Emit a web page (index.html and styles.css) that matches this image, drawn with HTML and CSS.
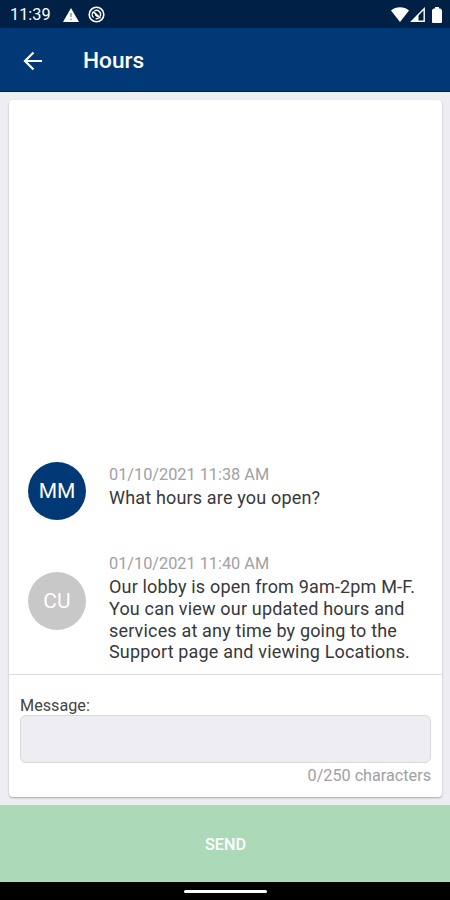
FILE: index.html
```html
<!DOCTYPE html>
<html lang="en">
<head>
    <meta charset="UTF-8">
    <meta name="viewport" content="width=device-width, initial-scale=1.0">
    <title>Hours</title>
    <link rel="stylesheet" href="styles.css">
</head>
<body>
    <div class="status-bar">
        <span class="clock">11:39</span>
        <svg class="warning" width="16" height="14" viewBox="0 0 16 14">
            <path d="M8 0L16 14H0z" fill="#fff"/>
            <path d="M8 5v4M8 10.5v1.5" stroke="#8a94a4" stroke-width="1.5"/>
        </svg>
        <svg class="sync" width="17" height="17" viewBox="0 0 17 17" fill="none" stroke="#fff">
            <circle cx="8.5" cy="8.5" r="7.3" stroke-width="1.6"/>
            <path d="M5.6 11.6A4.2 4.2 0 0 1 5.2 5.8M6.4 4.9A4.2 4.2 0 0 1 12.2 10.4M10.8 12A4.2 4.2 0 0 1 7.6 12.6" stroke-width="1.4"/>
            <path d="M5.2 5.6l7.2 6.6M7.2 8.4L10 11" stroke-width="1.6"/>
        </svg>
        <div class="system-icons">
            <svg width="18" height="15" viewBox="0 0 18 15">
                <path d="M0 3.4C5 -.8 13 -.8 18 3.4L9 15z" fill="#fff"/>
            </svg>
            <svg class="signal" width="15" height="15" viewBox="0 0 15 15">
                <path d="M1.8 14.2L14.2 1.8V14.2z" fill="none" stroke="#fff" stroke-width="1.4"/>
                <path d="M8.5 6.8V14H2z" fill="#fff"/>
            </svg>
            <svg class="battery" width="10" height="16" viewBox="0 0 10 16">
                <path d="M3 0h4v1.6h1.4L10 3v12a1 1 0 0 1-1 1H1a1 1 0 0 1-1-1V3l1.6-1.4H3z" fill="#fff"/>
            </svg>
        </div>
    </div>

    <header class="app-bar">
        <svg class="back" width="20" height="20" viewBox="0 0 20 20">
            <path d="M19 10H2M10.5 1.5L2 10l8.5 8.5" fill="none" stroke="#fff" stroke-width="2.2"/>
        </svg>
        <h1>Hours</h1>
    </header>

    <main class="content">
        <div class="card">
            <div class="thread">
                <div class="message">
                    <div class="avatar">MM</div>
                    <div class="message-body">
                        <div class="time">01/10/2021 11:38 AM</div>
                        <div class="text">What hours are you open?</div>
                    </div>
                </div>
                <div class="message reply">
                    <div class="avatar">CU</div>
                    <div class="message-body">
                        <div class="time">01/10/2021 11:40 AM</div>
                        <div class="text">Our lobby is open from 9am-2pm M-F.<br>You can view our updated hours and<br>services at any time by going to the<br>Support page and viewing Locations.</div>
                    </div>
                </div>
            </div>
            <div class="compose">
                <label for="message">Message:</label>
                <input id="message" type="text" maxlength="250">
                <div class="counter">0/250 characters</div>
            </div>
        </div>
    </main>

    <button class="send">SEND</button>
    <div class="nav-bar"><div class="handle"></div></div>
</body>
</html>
```

FILE: styles.css
```css
* {
    box-sizing: border-box;
}
body {
    margin: 0;
    height: 900px;
    display: flex;
    flex-direction: column;
    font-family: Roboto, sans-serif;
    background-color: #eeeef2;
    overflow: hidden;
}
.status-bar {
    height: 28px;
    display: flex;
    align-items: center;
    padding: 1px 8px 0 10px;
    background-color: #002145;
    color: #fff;
}
.clock {
    width: 41px;
    font-size: 16.3px;
    line-height: 28px;
}
.warning {
    margin-left: 12px;
}
.sync {
    margin-left: 9px;
}
.system-icons {
    margin-left: auto;
    display: flex;
    align-items: center;
}
.signal {
    margin-left: 1px;
}
.battery {
    margin-left: 7px;
}
.app-bar {
    height: 64px;
    display: flex;
    align-items: center;
    padding: 2px 0 0 23px;
    background-color: #003976;
    border-bottom: 1px solid #001d5c;
    color: #fff;
}
.app-bar h1 {
    margin: 1px 0 0 40px;
    font-size: 22.7px;
    font-weight: 500;
    line-height: 28px;
}
.content {
    flex: 1;
    display: flex;
    padding: 8px 8px 8px 9px;
}
.card {
    flex: 1;
    display: flex;
    flex-direction: column;
    background-color: #fff;
    border-radius: 4px;
    box-shadow: 0 1px 2px rgba(0, 0, 0, 0.3);
}
.thread {
    flex: 1;
    display: flex;
    flex-direction: column;
    justify-content: flex-end;
    padding: 0 0 11px 19px;
}
.message {
    display: flex;
    gap: 23px;
    margin-bottom: 32px;
}
.avatar {
    width: 58px;
    height: 58px;
    margin-top: -1px;
    border-radius: 50%;
    background-color: #003976;
    color: #fff;
    font-size: 21px;
    line-height: 59px;
    text-align: center;
}
.reply {
    margin-bottom: 0;
}
.reply .avatar {
    margin-top: 20px;
    background-color: #c8c8c8;
}
.time {
    color: #a0a0a5;
    font-size: 16.3px;
    line-height: 24px;
}
.text {
    color: #38383a;
    font-size: 18px;
    line-height: 21.7px;
    letter-spacing: 0.17px;
    white-space: nowrap;
}
.compose {
    height: 123px;
    padding: 21px 11px 0;
    border-top: 1px solid #dcdcde;
}
.compose label {
    display: block;
    color: #444;
    font-size: 16.2px;
    line-height: 19px;
}
.compose input {
    display: block;
    width: 100%;
    height: 48px;
    border: 1px solid #d8d8dc;
    border-radius: 6px;
    background-color: #eeeef2;
}
.counter {
    color: #a0a0a5;
    font-size: 16.2px;
    line-height: 25px;
    text-align: right;
}
.send {
    height: 77px;
    border: 0;
    padding: 1px 0 0 1px;
    background-color: #acdab9;
    color: #fff;
    font-family: inherit;
    font-size: 16.2px;
    font-weight: 500;
}
.nav-bar {
    height: 18px;
    display: flex;
    justify-content: center;
    padding-top: 8px;
    background-color: #000;
}
.handle {
    width: 83px;
    height: 3px;
    border-radius: 2px;
    background-color: #fff;
}
```
